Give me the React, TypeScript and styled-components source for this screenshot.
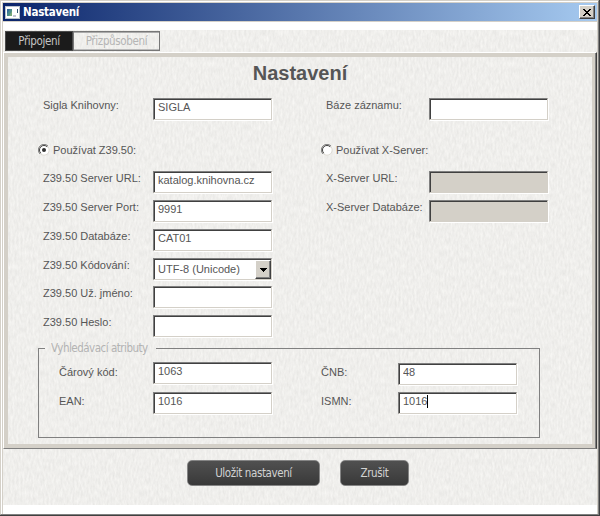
import React from "react";
import styled, { createGlobalStyle, css } from "styled-components";

const weave = encodeURIComponent(
  `<svg xmlns="http://www.w3.org/2000/svg" width="300" height="240"><filter id="f" x="0" y="0" width="100%" height="100%" color-interpolation-filters="sRGB"><feTurbulence type="fractalNoise" baseFrequency="0.5 0.16" numOctaves="3" seed="8" stitchTiles="stitch"/><feColorMatrix values="0.085 0 0 0 0.896  0.085 0 0 0 0.893  0.085 0 0 0 0.883  0 0 0 0 1"/></filter><rect width="300" height="240" filter="url(#f)"/></svg>`
);

const Global = createGlobalStyle`
  * { box-sizing: border-box; }
  body { margin: 0; background: #fff; overflow: hidden; }
`;

const narrow = css`
  font-family: "DejaVu Sans Condensed", "DejaVu Sans", sans-serif;
  font-stretch: condensed;
`;

const Frame = styled.div`
  width: 600px;
  height: 516px;
  background: #d4d0c8;
  border-style: solid;
  border-width: 0 1px 1px 0;
  border-color: #404040;
`;
const FrameInner = styled.div`
  height: 515px;
  border-style: solid;
  border-width: 1px;
  border-color: #d4d0c8 #808080 #808080 #d4d0c8;
`;
const Window = styled.div`
  height: 513px;
  border-style: solid;
  border-width: 1px 0 0 1px;
  border-color: #fff;
  padding: 1px 1px 1px 1px;
  font: 11px/14px "Liberation Sans", Arial, sans-serif;
  color: #565656;
`;
const TitleBar = styled.header`
  height: 18px;
  display: flex;
  align-items: center;
  padding: 0 2px;
  background: linear-gradient(90deg, #0a246a, #a6caf0);
`;
const Title = styled.span`
  ${narrow}
  flex: 1;
  margin-left: 3px;
  font-weight: bold;
  font-size: 11.5px;
  letter-spacing: -0.25px;
  color: #fff;
`;
const Close = styled.button`
  width: 16px;
  height: 14px;
  padding: 0;
  display: grid;
  place-items: center;
  background: #d4d0c8;
  border: 1px solid;
  border-color: #fff #404040 #404040 #fff;
  box-shadow: inset -1px -1px #808080;
`;
const Client = styled.main`
  height: 492px;
  margin-top: 1px;
  background: #fff;
  padding: 8px 0;
`;
const Canvas = styled.div`
  height: 475px;
  padding-top: 1px;
  background: #efeeec url("data:image/svg+xml,${weave}");
`;
const Tabs = styled.nav`
  display: flex;
  height: 21px;
  padding-left: 2px;
`;
const Tab = styled.button<{ $active?: boolean }>`
  ${narrow}
  width: ${(p) => (p.$active ? 68 : 87)}px;
  height: 20px;
  padding: 1px 0 0;
  font-size: 11.5px;
  letter-spacing: -0.35px;
  line-height: 17px;
  text-align: center;
  color: ${(p) => (p.$active ? "#c4c4c4" : "#b5b5b5")};
  background: ${(p) => (p.$active ? "#1b1b1b" : "transparent")};
  border: 1px solid ${(p) => (p.$active ? "#4a4a4a" : "#777")};
  ${(p) => !p.$active && "box-shadow: inset 0 1px #aaa, inset 0 -1px #bbb;"}
`;
const Panel = styled.section`
  height: 397px;
  border-style: solid;
  border-width: 1px 1px 1px 1px;
  border-color: #fff #404040 #808080 #fff;
`;
const PanelEdge = styled.div`
  height: 395px;
  border-style: solid;
  border-width: 4px 3px 4px 4px;
  border-color: #d4d0c8;
  box-shadow: 0 1px #808080, 1px 0 #808080;
  margin-right: 1px;
`;
const Heading = styled.h1`
  height: 41px;
  margin: 0;
  padding-top: 4px;
  text-align: center;
  font-size: 20px;
  line-height: 24px;
  color: #565656;
`;
const Columns = styled.div<{ $height: number }>`
  display: grid;
  grid-template-columns: 283px 250px;
  height: ${(p) => p.$height}px;
  padding-left: 30px;
  align-items: start;
`;
const Field = styled.label<{ $labelWidth: number; $height?: number; $inset?: number; $drop?: number }>`
  display: grid;
  grid-template-columns: ${(p) => p.$labelWidth}px 119px;
  height: ${(p) => p.$height ?? 29}px;
  padding-left: ${(p) => p.$inset ?? 5}px;
  align-items: start;
  white-space: nowrap;

  > span { padding-top: ${(p) => p.$drop ?? 0}px; }
`;
const sunken = css`
  width: 119px;
  height: 22px;
  border: 1px solid;
  border-color: #808080 #d4d0c8 #d4d0c8 #808080;
  box-shadow: inset 1px 1px #404040, 1px 1px #fff;
  background: #fff;
  color: #565656;
`;
const Input = styled.input`
  ${sunken}
  font: 11px/14px "Liberation Sans", Arial, sans-serif;
  padding: 0 4px 4px;
  border-radius: 0;
  outline: 0;
  &:disabled { background: #d4d0c8; }
`;
const FocusedInput = styled.div`
  ${sunken}
  display: flex;
  padding: 1px 4px;
`;
const Caret = styled.i`
  width: 1px;
  height: 13px;
  margin-top: 1px;
  background: #000;
`;
const Select = styled.div`
  ${sunken}
  display: flex;
  align-items: center;
  padding: 1px 0 0 4px;
  > span { flex: 1; margin-top: -1px; }
`;
const Arrow = styled.span`
  && { flex: none; margin-top: 0; }
  width: 16px;
  height: 19px;
  display: grid;
  place-items: center;
  background: #d4d0c8;
  border: 1px solid;
  border-color: #fff #404040 #404040 #fff;
  box-shadow: inset -1px -1px #808080;
`;
const Choice = styled.label`
  display: flex;
  align-items: center;
  gap: 3px;
  height: 14px;
  white-space: nowrap;
`;
const Attributes = styled.fieldset`
  width: 502px;
  height: 97px;
  margin: 0 0 0 30px;
  padding: 7px 0 0;
  border: 1px solid #808080;
  display: grid;
  grid-template-columns: 262px 200px;
`;
const Legend = styled.legend`
  ${narrow}
  margin-left: 6px;
  padding: 0 8px 0 6px;
  font-size: 11.5px;
  letter-spacing: -0.5px;
  line-height: 14px;
  color: #b3b3b3;
`;
const AttributeColumn = styled.div<{ $top: number }>`
  padding-top: ${(p) => p.$top}px;
`;
const Actions = styled.footer`
  display: flex;
  gap: 20px;
  padding: 11px 0 0 184px;
`;
const Action = styled.button<{ $width: number }>`
  ${narrow}
  width: ${(p) => p.$width}px;
  height: 26px;
  padding: 0 0 1px;
  border: 1px solid #858585;
  border-radius: 5px;
  background: linear-gradient(#505050, #393939);
  color: #d2d2d2;
  font-size: 11.5px;
  letter-spacing: -0.4px;
`;

const RadioMark = ({ checked }: { checked?: boolean }) => (
  <svg width="12" height="12" viewBox="0 0 12 12">
    <circle cx="6" cy="6" r="5.2" fill="#fff" stroke="#dedbd4" />
    <path d="M2 10A5.5 5.5 0 0 1 10 2" fill="none" stroke="#808080" />
    <path d="M2.8 9.2A4.5 4.5 0 0 1 9.2 2.8" fill="none" stroke="#404040" />
    {checked && <circle cx="6" cy="6" r="2" fill="#303030" />}
  </svg>
);

const AppIcon = () => (
  <svg width="15" height="13" viewBox="0 0 15 13">
    <path d="M0 0H15V13H0Z" fill="#b9c3cc" />
    <path d="M1 1H14V12H1Z" fill="#fff" />
    <path d="M2 3H7V10H2Z" fill="#4c8c8c" />
    <path d="M2 3H5L2 8Z" fill="#356c9a" />
    <path d="M4 10L7 5V10Z" fill="#78a878" />
    <path d="M8 9H11V11H8Z" fill="#c1c5d4" />
    <path d="M12 3H13V7H12Z" fill="#315570" />
  </svg>
);

type TextFieldProps = {
  label: string;
  value?: string;
  labelWidth?: number;
  height?: number;
  inset?: number;
  drop?: number;
  disabled?: boolean;
};
const TextField = ({ label, value = "", labelWidth = 110, height, inset, drop, disabled }: TextFieldProps) => (
  <Field $labelWidth={labelWidth} $height={height} $inset={inset} $drop={drop}>
    <span>{label}</span>
    <Input defaultValue={value} disabled={disabled} />
  </Field>
);

export default function App() {
  return (
    <Frame>
      <Global />
      <FrameInner>
        <Window>
          <TitleBar>
            <AppIcon />
            <Title>Nastavení</Title>
            <Close aria-label="Zavřít">
              <svg width="8" height="7" viewBox="0 0 8 7" shapeRendering="crispEdges">
                <path d="M0 0h2v1h1v1h2v-1h1v-1h2v1h-1v1h-1v1h-1v1h1v1h1v1h1v1h-2v-1h-1v-1h-2v1h-1v1h-2v-1h1v-1h1v-1h1v-1h-1v-1h-1v-1h-1z" />
              </svg>
            </Close>
          </TitleBar>
          <Client>
            <Canvas>
              <Tabs>
                <Tab $active>Připojení</Tab>
                <Tab>Přizpůsobení</Tab>
              </Tabs>
              <Panel>
                <PanelEdge>
                  <Heading>Nastavení</Heading>
                  <Columns $height={45}>
                    <TextField label="Sigla Knihovny:" value="SIGLA" />
                    <TextField label="Báze záznamu:" labelWidth={103} />
                  </Columns>
                  <Columns $height={28}>
                    <Choice><RadioMark checked />Používat Z39.50:</Choice>
                    <Choice><RadioMark />Používat X-Server:</Choice>
                  </Columns>
                  <Columns $height={170}>
                    <div>
                      <TextField label="Z39.50 Server URL:" value="katalog.knihovna.cz" />
                      <TextField label="Z39.50 Server Port:" value="9991" />
                      <TextField label="Z39.50 Databáze:" value="CAT01" />
                      <Field $labelWidth={110} $height={28}>
                        <span>Z39.50 Kódování:</span>
                        <Select>
                          <span>UTF-8 (Unicode)</span>
                          <Arrow>
                            <svg width="7" height="4" viewBox="0 0 7 4" shapeRendering="crispEdges"><path d="M0 0H7L3.5 4Z" /></svg>
                          </Arrow>
                        </Select>
                      </Field>
                      <TextField label="Z39.50 Už. jméno:" />
                      <TextField label="Z39.50 Heslo:" />
                    </div>
                    <div>
                      <TextField label="X-Server URL:" labelWidth={103} disabled />
                      <TextField label="X-Server Databáze:" labelWidth={103} disabled />
                    </div>
                  </Columns>
                  <Attributes>
                    <Legend>Vyhledávací atributy</Legend>
                    <AttributeColumn $top={0}>
                      <TextField label="Čárový kód:" value="1063" labelWidth={94} inset={20} drop={3} height={30} />
                      <TextField label="EAN:" value="1016" labelWidth={94} inset={20} drop={2} />
                    </AttributeColumn>
                    <AttributeColumn $top={1}>
                      <TextField label="ČNB:" value="48" labelWidth={77} inset={20} drop={2} />
                      <Field $labelWidth={77} $inset={20} $drop={2}>
                        <span>ISMN:</span>
                        <FocusedInput>1016<Caret /></FocusedInput>
                      </Field>
                    </AttributeColumn>
                  </Attributes>
                </PanelEdge>
              </Panel>
              <Actions>
                <Action $width={133}>Uložit nastavení</Action>
                <Action $width={69}>Zrušit</Action>
              </Actions>
            </Canvas>
          </Client>
        </Window>
      </FrameInner>
    </Frame>
  );
}
